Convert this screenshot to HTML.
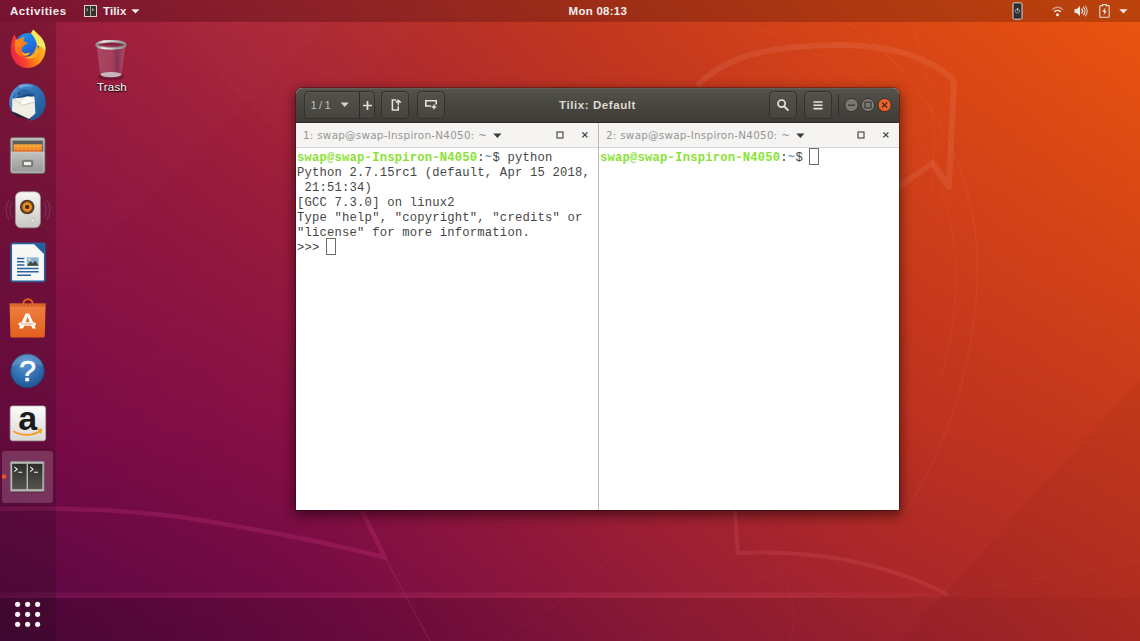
<!DOCTYPE html>
<html lang="en">
<head>
<meta charset="utf-8">
<title>Tilix: Default</title>
<style>
*{box-sizing:border-box;margin:0;padding:0}
html,body{width:1140px;height:641px;overflow:hidden;background:#7b1045}
body{position:relative;font-family:"Liberation Sans","DejaVu Sans",sans-serif;color:#fff}
#wall{position:absolute;left:0;top:0;width:1140px;height:641px}
#topbar{position:absolute;left:0;top:0;width:1140px;height:22px;background:rgba(0,0,0,.2)}
#topbar .t{position:absolute;top:1.400px;height:22px;line-height:21.500px;font-weight:bold;font-size:11.500px;color:#f2f0ee;white-space:nowrap}
#dock{position:absolute;left:0;top:22px;width:56px;height:619px;background:rgba(20,14,20,.2)}
#dockicons{position:absolute;left:0;top:0;display:block}
#hl{position:absolute;left:2px;top:429px;width:51px;height:52px;border-radius:3px;background:rgba(255,255,255,.17)}
.ico{position:absolute;left:0;width:54px;height:54px}
.ico svg{position:absolute;left:0;top:0}
#trash{position:absolute;left:80.500px;top:36px;width:60px;height:62px}
#trash .lbl{position:absolute;left:1.500px;top:43px;width:60px;height:16px;line-height:16px;text-align:center;font-size:11.500px;letter-spacing:.16px;color:#fff;text-shadow:0 1px 1px rgba(0,0,0,.95),0 0 2px rgba(0,0,0,.7)}
#win{position:absolute;left:296px;top:88px;width:603px;height:422px;border-radius:6px 6px 0 0;box-shadow:0 4px 12px 2px rgba(0,0,0,.48),0 0 0 1px rgba(40,15,15,.35);background:#fff}
#hdr{position:absolute;left:0;top:0;width:603px;height:35px;border-radius:6px 6px 0 0;background:linear-gradient(#54534c,#47463f 50%,#3d3c37);border-bottom:1px solid #2b2a27;box-shadow:inset 0 1px 0 rgba(255,255,255,.08)}
.hb{position:absolute;top:3px;height:28px;border:1px solid #33322d;border-radius:4px;background:linear-gradient(#52514a,#46453f);box-shadow:inset 0 1px 0 rgba(255,255,255,.05)}
.hi{position:absolute;display:block;overflow:visible}
.htx{position:absolute;top:3px;height:28px;line-height:28px;font-size:11.300px;word-spacing:-.900px;color:#c2beb5;white-space:nowrap}
#title{position:absolute;left:0;top:0;width:603px;height:34px;line-height:34px;text-align:center;font-weight:bold;font-size:11.500px;letter-spacing:.57px;color:#dfdbd2}
.tabrow{position:absolute;top:35px;height:25px;background:#f5f4f3;border-bottom:1px solid #d9d7d4}
.tabrow .n{position:absolute;left:7px;top:0;height:24px;line-height:25px;font-family:"DejaVu Sans","Liberation Sans",sans-serif;font-size:10.400px;letter-spacing:.26px;color:#969693;white-space:nowrap}
.vdiv{position:absolute;left:302px;top:35px;width:1px;height:387px;background:#bdbcb9}
.term{position:absolute;top:60px;height:362px;background:#fff;font-family:"Liberation Mono","DejaVu Sans Mono",monospace;font-size:12.2px;letter-spacing:.2px;line-height:15px;color:#464646;white-space:pre;padding:2.700px 0 0 1px}
.term .g{color:#8ae234;font-weight:bold}
.term .b{color:#729fcf;font-weight:bold}
.cur{display:inline-block;width:10px;height:17.500px;border:1px solid #6c6c6c;vertical-align:top;margin:-3px 0 -2px -1px}
</style>
</head>
<body>
<svg id="wall" viewBox="0 0 1140 641">
<defs>
<linearGradient id="gt" x1="0" y1="0" x2="1" y2="0">
<stop offset="0" stop-color="#98193f"/>
<stop offset=".25" stop-color="#ae2934"/>
<stop offset=".5" stop-color="#c3381e"/>
<stop offset=".75" stop-color="#da4716"/>
<stop offset="1" stop-color="#ec550f"/>
</linearGradient>
<linearGradient id="gmid" x1="0" y1="0" x2="1" y2="0">
<stop offset="0" stop-color="#760a48"/>
<stop offset=".25" stop-color="#860f45"/>
<stop offset=".5" stop-color="#a01f36"/>
<stop offset=".78" stop-color="#bb3021"/>
<stop offset="1" stop-color="#c5391c"/>
</linearGradient>
<linearGradient id="gb" x1="0" y1="0" x2="1" y2="0">
<stop offset="0" stop-color="#530741"/>
<stop offset=".3" stop-color="#720a45"/>
<stop offset=".6" stop-color="#931b38"/>
<stop offset="1" stop-color="#b32c24"/>
</linearGradient>
<linearGradient id="gm1" gradientUnits="userSpaceOnUse" x1="0" y1="0" x2="0" y2="641">
<stop offset="0" stop-color="#fff" stop-opacity="0"/>
<stop offset=".68" stop-color="#fff" stop-opacity="1"/>
<stop offset="1" stop-color="#fff" stop-opacity="1"/>
</linearGradient>
<linearGradient id="gm2" gradientUnits="userSpaceOnUse" x1="0" y1="0" x2="0" y2="641">
<stop offset="0" stop-color="#fff" stop-opacity="0"/>
<stop offset=".68" stop-color="#fff" stop-opacity="0"/>
<stop offset="1" stop-color="#fff" stop-opacity="1"/>
</linearGradient>
<mask id="mk1"><rect width="1140" height="641" fill="url(#gm1)"/></mask>
<mask id="mk2"><rect width="1140" height="641" fill="url(#gm2)"/></mask>
<linearGradient id="dk" x1="0" y1="0" x2="1" y2="0"><stop offset="0" stop-color="#1a0010" stop-opacity=".2"/><stop offset=".5" stop-color="#1a0010" stop-opacity=".1"/><stop offset="1" stop-color="#1a0010" stop-opacity=".04"/></linearGradient>
<linearGradient id="band" x1="0" y1="0" x2="1" y2="0">
<stop offset="0" stop-color="#ff4f9a" stop-opacity=".1"/>
<stop offset=".8" stop-color="#ff6a7a" stop-opacity=".15"/>
<stop offset="1" stop-color="#ff6a7a" stop-opacity=".05"/>
</linearGradient>
</defs>
<rect width="1140" height="641" fill="url(#gt)"/>
<rect width="1140" height="641" fill="url(#gmid)" mask="url(#mk1)"/>
<rect width="1140" height="641" fill="url(#gb)" mask="url(#mk2)"/>
<!-- facets -->
<path d="M56 290L330 22H56z" fill="#fff" opacity=".012"/>
<path d="M160 22L420 22L296 150z" fill="#fff" opacity=".012"/>
<path d="M0 598H1140V641H0z" fill="url(#dk)"/>
<path d="M900 641L1140 380V641z" fill="#000" opacity=".03"/>
<!-- beaver line art -->
<g fill="none" stroke="#ffd0c0" stroke-linecap="round" stroke-linejoin="round">
<path d="M699 84C715 68 738 57 759 53C790 45 850 42 886 49C915 54 940 66 954 81L949 187L933 163L898 187" stroke-width="6" opacity=".1"/>
<path d="M845 22C905 60 960 130 975 230C985 320 960 430 900 520" stroke-width="1" opacity=".08"/>
<path d="M740 22C800 40 880 80 925 150C960 215 965 300 940 380" stroke-width="1" opacity=".06"/>
<path d="M910 22C930 70 940 130 930 200" stroke-width="1" opacity=".05"/>
</g>
<g fill="none" stroke="#ff70a0" stroke-linecap="round" stroke-linejoin="round">
<path d="M0 509C60 507 140 510 200 520C260 530 330 543 385 557.500L363 513" stroke-width="4.500" opacity=".16" stroke="#ff50a0"/>
<path d="M385 557.500L430 641" stroke-width="1.200" opacity=".14"/>
<path d="M735 512L738 553C780 551 830 554 880 568C905 575 930 585 946 594" stroke-width="4" opacity=".13" stroke="#ff8a8a"/>
<path d="M500 641C560 600 600 580 640 520" stroke-width="1" opacity=".07"/>
<path d="M640 641C700 600 820 560 870 510" stroke-width="1" opacity=".06"/>
<path d="M760 530C790 580 800 610 790 641" stroke-width="1" opacity=".06"/>
<path d="M930 598L1140 560" stroke-width="1" opacity=".05" stroke="#ff9a80"/>
</g>
<path d="M0 592.500H900L950 594.500L900 598H0z" fill="url(#band)"/>
</svg>

<div id="trash">
<svg width="44" height="46" viewBox="0 0 44 46" style="position:absolute;left:8px;top:0;display:block">
<defs>
<linearGradient id="rim" x1="0" y1="0" x2="1" y2="0"><stop offset="0" stop-color="#8d8d8d"/><stop offset=".25" stop-color="#f1f1f1"/><stop offset=".6" stop-color="#bdbdbd"/><stop offset="1" stop-color="#8a8a8a"/></linearGradient>
<linearGradient id="tbody" x1="0" y1="0" x2="1" y2="0"><stop offset="0" stop-color="#c8b8c8" stop-opacity=".27"/><stop offset=".5" stop-color="#c8b8c8" stop-opacity=".22"/><stop offset=".7" stop-color="#6a4a70" stop-opacity=".4"/><stop offset="1" stop-color="#c8b8c8" stop-opacity=".27"/></linearGradient>
</defs>
<ellipse cx="22" cy="41" rx="13" ry="3.600" fill="#2a0a18" opacity=".35"/>
<path d="M7.600 9L11.200 38.500C14 42.500 30 42.500 32.800 38.500L36.400 9z" fill="url(#tbody)"/>
<ellipse cx="22" cy="38.600" rx="10.400" ry="2.700" fill="#d2ccd0" opacity=".85"/>
<ellipse cx="22" cy="8.800" rx="14.300" ry="3.500" fill="none" stroke="url(#rim)" stroke-width="2.700"/>
<ellipse cx="22" cy="9" rx="13.400" ry="2.900" fill="#6a2038" opacity=".35"/>
</svg>
<div class="lbl">Trash</div>
</div>

<div id="topbar">
<div class="t" style="left:10px;letter-spacing:.56px">Activities</div>
<svg class="hi" style="left:84px;top:5px" width="13" height="12" viewBox="0 0 13 12"><rect x=".5" y=".5" width="12" height="11" fill="#33322f" stroke="#d8d4cc" stroke-width="1"/><path d="M6.500 1v10" stroke="#bdb9b0" stroke-width=".8"/><path d="M2.500 3.500l1.500 1.200-1.500 1.200M8 3.500l1.500 1.200L8 5.900" fill="none" stroke="#e8e6e0" stroke-width=".8"/></svg>
<div class="t" style="left:103px;letter-spacing:.12px">Tilix</div>
<svg class="hi" style="left:131px;top:9px" width="9" height="5" viewBox="0 0 9 5"><path d="M.3.200h8.200L4.400 4.600z" fill="#eceae6"/></svg>
<div class="t" style="left:568.600px;letter-spacing:.25px">Mon 08:13</div>
<svg class="hi" style="left:1012px;top:2px" width="11" height="18" viewBox="0 0 11 18"><rect x="1" y=".8" width="9" height="16.400" rx="1.300" fill="#2f2e33" stroke="#d9d6d2" stroke-width="1"/><circle cx="5.500" cy="9" r="2.100" fill="none" stroke="#9d9aa0" stroke-width=".9"/><path d="M5.500 6v3" stroke="#c8c6cc" stroke-width=".9"/></svg>
<svg class="hi" style="left:1052px;top:6px" width="11" height="11" viewBox="0 0 11 11"><g fill="none" stroke="#eceae6" stroke-linecap="round"><path d="M.700 3.300a6.800 6.800 0 0 1 9.600 0" stroke-width="1.500" opacity=".5"/><path d="M2.700 5.600a4 4 0 0 1 5.600 0" stroke-width="1.400"/></g><circle cx="5.500" cy="8.800" r="1.500" fill="#eceae6"/></svg>
<svg class="hi" style="left:1073.500px;top:5px" width="14" height="12" viewBox="0 0 14 12"><path d="M.500 4h2.300L6 1v10L2.800 8H.500z" fill="#eceae6"/><g fill="none" stroke="#eceae6" stroke-linecap="round"><path d="M7.800 4a3 3 0 0 1 0 4" stroke-width="1.200"/><path d="M9.500 2.400a5.200 5.200 0 0 1 0 7.200" stroke-width="1.200"/><path d="M11.300 1a7.400 7.400 0 0 1 0 10" stroke-width="1.100" opacity=".8"/></g></svg>
<svg class="hi" style="left:1098.500px;top:4px" width="11" height="14" viewBox="0 0 11 14"><path d="M3.600 1.600V.600h3.800v1H9.500a.700.700 0 0 1 .7.700V12.600a.700.700 0 0 1-.7.700H1.500a.700.700 0 0 1-.7-.7V2.300a.700.700 0 0 1 .7-.7z" fill="none" stroke="#dedbd6" stroke-width="1.100"/><path d="M6.400 3.600L3.300 7.800h2L4.500 11.200 7.700 6.800h-2z" fill="#f2f0ec"/></svg>
<svg class="hi" style="left:1119px;top:9px" width="9" height="5" viewBox="0 0 9 5"><path d="M.3.200h8.200L4.400 4.600z" fill="#eceae6"/></svg>
</div>

<div id="dock">
<div id="hl"></div>
<svg id="dockicons" width="56" height="619" viewBox="0 22 56 619">
<defs>
<linearGradient id="ffb" x1="0" y1=".65" x2="1" y2=".3"><stop offset="0" stop-color="#ea1f44"/><stop offset=".32" stop-color="#f7452e"/><stop offset=".62" stop-color="#ff8c14"/><stop offset="1" stop-color="#ffc72c"/></linearGradient>
<linearGradient id="ffg" x1=".2" y1="0" x2=".7" y2="1"><stop offset="0" stop-color="#1593f5"/><stop offset=".6" stop-color="#1f6fe0"/><stop offset="1" stop-color="#2a4fb0"/></linearGradient>
<linearGradient id="ffh" x1="0" y1="0" x2=".6" y2="1"><stop offset="0" stop-color="#ff9a18"/><stop offset="1" stop-color="#ff5a22"/></linearGradient>
<linearGradient id="tbb" x1="0" y1="0" x2="1" y2="1"><stop offset="0" stop-color="#5a9ad8"/><stop offset=".45" stop-color="#2f73b4"/><stop offset="1" stop-color="#1c4f8c"/></linearGradient>
<linearGradient id="fcab" x1="0" y1="0" x2="0" y2="1"><stop offset="0" stop-color="#bdbdbb"/><stop offset="1" stop-color="#7f7f7d"/></linearGradient>
<linearGradient id="fdrw" x1="0" y1="0" x2="0" y2="1"><stop offset="0" stop-color="#c2c2c0"/><stop offset="1" stop-color="#989896"/></linearGradient>
<linearGradient id="ffold" x1="0" y1="0" x2="0" y2="1"><stop offset="0" stop-color="#ffb13a"/><stop offset="1" stop-color="#e8621c"/></linearGradient>
<linearGradient id="spk" x1="0" y1="0" x2="0" y2="1"><stop offset="0" stop-color="#f7f7f5"/><stop offset="1" stop-color="#c9c8c4"/></linearGradient>
<radialGradient id="cone" cx=".5" cy=".5" r=".5"><stop offset="0" stop-color="#3a2410"/><stop offset=".28" stop-color="#5a3210"/><stop offset=".34" stop-color="#f0a020"/><stop offset=".62" stop-color="#e07818"/><stop offset=".7" stop-color="#6a4a2a"/><stop offset="1" stop-color="#4a3a2a"/></radialGradient>
<linearGradient id="bag" x1="0" y1="0" x2="0" y2="1"><stop offset="0" stop-color="#f08040"/><stop offset="1" stop-color="#e2601c"/></linearGradient>
<radialGradient id="hlp" cx=".45" cy=".3" r=".75"><stop offset="0" stop-color="#5a96d2"/><stop offset=".6" stop-color="#2f6cae"/><stop offset="1" stop-color="#1d4f8a"/></radialGradient>
<linearGradient id="amz" x1="0" y1="0" x2="0" y2="1"><stop offset="0" stop-color="#fbfbfa"/><stop offset="1" stop-color="#d9d8d5"/></linearGradient>
<linearGradient id="tpane" x1="0" y1="0" x2="0" y2="1"><stop offset="0" stop-color="#2c2c2a"/><stop offset="1" stop-color="#55554f"/></linearGradient>
</defs>

<!-- Firefox -->
<g transform="translate(6,28)">
<path d="M4.6 19C5 14 6.8 9.8 8.4 6.2C9 9 10.4 10.6 12 11.6C15 8 18.5 6 22.5 5.6C23.5 5.5 24.6 5.6 25.6 5.8C25.4 4.2 26.2 2.8 27.6 1.8C30 5 34.4 7.4 37.2 12.4C39.6 16.6 40.2 21.6 38.8 26.4C36.6 34 29.8 40 21.6 40C12 40 4 32 4.6 19Z" fill="url(#ffb)"/>
<circle cx="21.400" cy="17" r="11.700" fill="url(#ffg)"/>
<path d="M25.2 5.6C25.2 4.2 26.2 2.8 27.6 1.8C30 5 34.4 7.4 37.2 12.4C39 15.6 39.8 19 39.4 22.6C37 19 34 17.6 31 17.4C30.6 13 28 8.6 25.2 5.6Z" fill="#f4ea62"/>
<path d="M30.6 17.2C33.6 20 33.4 25.4 30 28.4C27 31 22 31.2 18.6 29C23 29.6 28.6 27 30.6 17.2Z" fill="#ffb21e" opacity=".9"/>
<path d="M9.4 12.4C12.6 11.6 15.8 9.4 19 8.6C17.6 10.4 17.2 12 17.6 13.6C19.2 13.8 20.6 14.2 21.8 15.2C20.2 16.6 18.2 17 17 18.6C15.6 20.4 15 22 16 23.4C18.2 25.6 21.4 25.8 24.4 24.6C22.6 27.6 19 29.4 15.2 28.4C10 27 7.2 20 9.4 12.4Z" fill="url(#ffh)"/>
<path d="M15.4 24.2C18 26.4 21.6 26 24.4 24.6C23.4 26.4 21.4 27.6 19.2 27.6C17.4 27.4 15.8 26 15.4 24.2Z" fill="#ffc02a"/>
</g>

<!-- Thunderbird -->
<g transform="translate(6,81)">
<path d="M3.2 22C3 12 10 3 20.6 2.6C31 2.4 39.6 10 39.8 21C40 31 32.6 39.4 23.4 39.8C26 36 27 33 26.4 30L8 33C5 30 3.4 26 3.2 22Z" fill="url(#tbb)"/>
<path d="M7 17C10 10 20 8 27.500 12L30 18L28 15L7 18Z" fill="#173d6c" opacity=".8"/>
<path d="M5 31L10.6 35.6L24 38.4L26 33Z" fill="#162538" opacity=".85"/>
<path d="M6.4 17.6L28.4 15.6L29.4 32.6L23 38L6 30Z" fill="#f1eee4"/>
<path d="M14 22C15.4 17.6 19 15.4 22.6 15.6C26.2 15.8 28.6 18 28.6 20.6L16.6 24.4Z" fill="#fbfaf5" stroke="#cfccc0" stroke-width=".5"/>
<path d="M6.6 18L16.6 24.4L29 20.8" fill="none" stroke="#c9c6ba" stroke-width=".7"/>
<path d="M8.4 15.8C9 11.4 12.6 8.4 17 8.2C22.6 8 27.6 11 29.4 16C26.4 13 22 12.2 18.6 13.4C17 14 15.4 15.4 13.6 15.6C12 15.8 10 15 8.4 15.8Z" fill="#2a67a6"/>
<path d="M9.6 12.4C10.8 9 13.4 7 16.4 6.6C13.8 8.4 12.6 10.6 12.8 13.2C12.8 14.4 11.4 16 10.2 17L7.6 17.4C8.6 16 9.2 14.4 9.6 12.4Z" fill="#3c7cc0"/>
<circle cx="12.6" cy="12.6" r=".8" fill="#3a1d10"/>
<path d="M12 4.6C17 2.4 23 3 27.6 6C23 5 18 5.2 14 7.4Z" fill="#7fb2e4" opacity=".75"/>
</g>

<!-- Files -->
<g transform="translate(6,134)">
<rect x="4.300" y="3.500" width="34.700" height="36" rx="2.200" fill="url(#fcab)" stroke="#6a6a68" stroke-width=".8"/>
<rect x="6.600" y="6.600" width="30.200" height="11.600" fill="#5f5e59"/>
<rect x="7.600" y="10.300" width="28.200" height="7.600" fill="url(#ffold)"/>
<path d="M7.600 12.600h28.200M7.600 15h28.200" stroke="#ffd25a" stroke-width=".7" opacity=".7"/>
<path d="M10 10.300v7.600M14 10.300v7.600M18 10.300v7.600M22 10.300v7.600M26 10.300v7.600M30 10.300v7.600M34 10.300v7.600" stroke="#c0501a" stroke-width=".6" opacity=".45"/>
<path d="M5.400 18h32.500v18.600a1.600 1.600 0 0 1-1.600 1.600H7a1.600 1.600 0 0 1-1.600-1.600z" fill="url(#fdrw)" stroke="#d6d6d4" stroke-width=".7"/>
<rect x="16.300" y="26.400" width="10.400" height="6.200" rx="1" fill="#838381" stroke="#62625f" stroke-width=".6"/>
<rect x="18" y="27.900" width="7" height="3.200" rx=".5" fill="#f0efec"/>
</g>

<!-- Rhythmbox -->
<g transform="translate(6,188)">
<path d="M6.4 14.6a12 12 0 0 0 0 14.6M3 12.4a17 17 0 0 0 0 19M37.6 14.6a12 12 0 0 1 0 14.6M41 12.4a17 17 0 0 1 0 19" fill="none" stroke="#8a9fd0" stroke-width="1.200" opacity=".22"/>
<rect x="9.4" y="3.8" width="25" height="36" rx="5.5" fill="url(#spk)" stroke="#9a9994" stroke-width=".7"/>
<circle cx="21.200" cy="19" r="7.300" fill="url(#cone)"/>
<circle cx="26.600" cy="32.600" r="2.200" fill="#e6e5e2" stroke="#aaa9a5" stroke-width=".6"/>
</g>

<!-- LibreOffice Writer -->
<g transform="translate(6,241)">
<rect x="5.200" y="2.400" width="33.600" height="38" rx="1.600" fill="#f7f7f6" stroke="#28609e" stroke-width="1.700"/>
<path d="M27.400 2.400h10.600a.800.800 0 0 1 .8.800v10.600z" fill="#28609e"/>
<path d="M27.400 2.400l11.400 11.400" stroke="#6f9bd0" stroke-width=".7" opacity=".8"/>
<path d="M11 17.600h7.400M11 20.800h7.400M11 24h7.400M11 27.400h21.600M11 30.800h21.600M11 34.200h14" stroke="#2b63a0" stroke-width="1.500"/>
<rect x="20.800" y="16.400" width="11.800" height="8.400" fill="#8fb4d8"/>
<path d="M20.800 24.800l3.600-4.600 2.600 2.400 2.200-3.200 3.400 5.400z" fill="#3f4a3a"/>
<circle cx="23.600" cy="18.400" r="1" fill="#fff7c0"/>
</g>

<!-- Ubuntu Software -->
<g transform="translate(6,295)">
<path d="M17.400 9.800V8.800a4.600 4.600 0 0 1 9.200 0v1" fill="none" stroke="#e2601c" stroke-width="2"/>
<path d="M3.600 8.600h36l-.8 32.400a1.400 1.400 0 0 1-1.400 1.400H5.800a1.400 1.400 0 0 1-1.400-1.400z" fill="url(#bag)"/>
<path d="M3.600 8.600h36l-.1 3H3.700z" fill="#c9501a" opacity=".75"/>
<path d="M5 10h33" stroke="#f7a070" stroke-width=".8" stroke-dasharray="2 1.500" opacity=".7"/>
<path d="M13 33.600L19.600 18.400h3.600L29.800 33.600h-3.400l-1.300-3.200h-6.800l-1.300 3.200zM19.400 27.600h4.400L21.600 21.800z" fill="#fff" fill-rule="evenodd"/>
<rect x="12.400" y="27.400" width="17.600" height="3.200" rx="1.600" fill="#fff"/>
<rect x="15" y="28.500" width="12.500" height="1" fill="#e2601c" opacity=".6"/>
</g>

<!-- Help -->
<g transform="translate(6,349)">
<circle cx="21.500" cy="22" r="16.800" fill="url(#hlp)" stroke="#1b4272" stroke-width=".8"/>
<path d="M5.700 18a16 16 0 0 1 31.600 0a30 30 0 0 0-31.600 0z" fill="#fff" opacity=".13"/>
<text x="21.600" y="32.200" text-anchor="middle" font-family="Liberation Sans, DejaVu Sans, sans-serif" font-weight="normal" font-size="30" fill="#fff" stroke="#fff" stroke-width=".7">?</text>
</g>

<!-- Amazon -->
<g transform="translate(6,402)">
<rect x="4.200" y="4" width="35.400" height="34.800" rx="2.400" fill="url(#amz)" stroke="#b9b8b4" stroke-width=".7"/>
<text x="21.800" y="27.800" text-anchor="middle" font-family="Liberation Sans, DejaVu Sans, sans-serif" font-weight="bold" font-size="34" fill="#1b1b1b">a</text>
<path d="M7.800 29.600c8 4.600 19 4.400 26.400-.6" fill="none" stroke="#f79a1c" stroke-width="1.700" stroke-linecap="round"/>
<path d="M31.600 27.600l4-.4-1.200 3.800" fill="none" stroke="#f79a1c" stroke-width="1.400" stroke-linecap="round" stroke-linejoin="round"/>
</g>

<!-- Tilix -->
<circle cx="4" cy="476.500" r="2.300" fill="#e95420"/>
<g transform="translate(6,455)">
<rect x="4.400" y="6.400" width="33.600" height="30" rx="1" fill="#b9b9b6" stroke="#8a8a86" stroke-width=".7"/>
<rect x="6.200" y="8.800" width="14.400" height="25.400" fill="url(#tpane)"/>
<rect x="22" y="8.800" width="14.400" height="25.400" fill="url(#tpane)"/>
<path d="M8.400 11.800l2.800 2.400-2.800 2.400M12.400 17.200h3.800M24.200 11.800l2.800 2.400-2.800 2.400M28.200 17.200h3.800" fill="none" stroke="#f2f2f0" stroke-width="1.100"/>
<path d="M4.600 37.200h33.200" stroke="#3a2030" stroke-width="1" opacity=".5"/>
</g>

<!-- Show apps -->
<g fill="#f4f2f0">
<circle cx="17.600" cy="604.300" r="2.600"/><circle cx="27.600" cy="604.300" r="2.600"/><circle cx="37.600" cy="604.300" r="2.600"/>
<circle cx="17.600" cy="614.300" r="2.600"/><circle cx="27.600" cy="614.300" r="2.600"/><circle cx="37.600" cy="614.300" r="2.600"/>
<circle cx="17.600" cy="624.300" r="2.600"/><circle cx="27.600" cy="624.300" r="2.600"/><circle cx="37.600" cy="624.300" r="2.600"/>
</g>
</svg>
</div>

<div id="win">
<div id="hdr">
<div id="title">Tilix: Default</div>
<div class="hb" style="left:8px;width:71px"></div>
<div class="hb" style="left:62.5px;width:1px;border:0;border-radius:0;background:#2d2c29;box-shadow:none;top:4px;height:26px"></div>
<div class="htx" style="left:14.500px">1 / 1</div>
<svg class="hi" style="left:44px;top:14px" width="10" height="6" viewBox="0 0 10 6"><path d="M0.6 0.5h8.2l-4.1 4.6z" fill="#d6d2c8"/></svg>
<svg class="hi" style="left:66px;top:12px" width="11" height="11" viewBox="0 0 11 11"><path d="M5.5 1v9M1 5.5h9" stroke="#e4e0d6" stroke-width="1.7" fill="none"/></svg>
<div class="hb" style="left:85px;width:28px"></div>
<svg class="hi" style="left:93.700px;top:10px" width="14" height="14" viewBox="0 0 14 14"><path d="M6.2 2H2.4v10h5.8V8.2" stroke="#e4e0d6" stroke-width="1.6" fill="none"/><path d="M8.3 7.2V2.6M5.9 4.6L8.3 2.2l2.4 2.4" stroke="#e4e0d6" stroke-width="1.5" fill="none"/></svg>
<div class="hb" style="left:120.5px;width:28px"></div>
<svg class="hi" style="left:128px;top:11px" width="14" height="12" viewBox="0 0 14 12"><path d="M7.2 7H1.8V1.8h10.4v3.6" stroke="#e4e0d6" stroke-width="1.6" fill="none"/><path d="M10 5.6v4.6M7.7 7.9h4.6" stroke="#e4e0d6" stroke-width="1.5" fill="none"/></svg>
<div class="hb" style="left:473px;width:28px"></div>
<svg class="hi" style="left:480px;top:10px" width="14" height="14" viewBox="0 0 14 14"><circle cx="5.6" cy="5.6" r="3.6" stroke="#e9e5dc" stroke-width="1.7" fill="none"/><path d="M8.3 8.3l3.6 3.8" stroke="#e9e5dc" stroke-width="1.9" stroke-linecap="round"/></svg>
<div class="hb" style="left:508px;width:28px"></div>
<svg class="hi" style="left:516px;top:12px" width="12" height="11" viewBox="0 0 12 11"><path d="M1.5 2h9M1.5 5.3h9M1.5 8.6h9" stroke="#e9e5dc" stroke-width="1.6"/></svg>
<div style="position:absolute;left:542px;top:6px;width:1px;height:22px;background:#2f2e2a"></div>
<svg class="hi" style="left:547px;top:9px" width="52" height="16" viewBox="0 0 52 16">
<circle cx="8.5" cy="8" r="6.6" fill="#7b7972" stroke="#34332f" stroke-width="1"/><path d="M5 8.2h7" stroke="#42413c" stroke-width="1.5"/>
<circle cx="25" cy="8" r="6.6" fill="#7b7972" stroke="#34332f" stroke-width="1"/><rect x="22" y="5.2" width="6" height="5.6" fill="none" stroke="#42413c" stroke-width="1.4"/>
<circle cx="41.6" cy="8" r="6.6" fill="#e9632e" stroke="#4a2a1c" stroke-width="1"/><path d="M39 5.4l5.2 5.2M44.2 5.4L39 10.6" stroke="#5a2a16" stroke-width="1.4"/>
</svg>
</div>
<div class="tabrow" style="left:0;width:302px"><div class="n">1: swap@swap-Inspiron-N4050: ~</div>
<svg class="hi" style="left:197px;top:10px" width="9" height="6" viewBox="0 0 9 6"><path d="M0.3 0.5h8.2l-4.1 4.6z" fill="#3b3b39"/></svg>
<svg class="hi" style="left:260px;top:8px" width="8" height="8" viewBox="0 0 8 8"><rect x="1" y="1" width="6" height="6" fill="none" stroke="#3f3f3d" stroke-width="1.1"/></svg>
<svg class="hi" style="left:285px;top:8px" width="8" height="8" viewBox="0 0 8 8"><path d="M1.4 1.4l5 5M6.4 1.4l-5 5" stroke="#3f3f3d" stroke-width="1.3"/></svg>
</div>
<div class="vdiv"></div>
<div class="tabrow" style="left:303px;width:300px"><div class="n">2: swap@swap-Inspiron-N4050: ~</div>
<svg class="hi" style="left:197px;top:10px" width="9" height="6" viewBox="0 0 9 6"><path d="M0.3 0.5h8.2l-4.1 4.6z" fill="#3b3b39"/></svg>
<svg class="hi" style="left:258px;top:8px" width="8" height="8" viewBox="0 0 8 8"><rect x="1" y="1" width="6" height="6" fill="none" stroke="#3f3f3d" stroke-width="1.1"/></svg>
<svg class="hi" style="left:283px;top:8px" width="8" height="8" viewBox="0 0 8 8"><path d="M1.4 1.4l5 5M6.4 1.4l-5 5" stroke="#3f3f3d" stroke-width="1.3"/></svg>
</div>
<div class="term" style="left:0;width:302px"><span class="g">swap@swap-Inspiron-N4050</span>:<span class="b">~</span>$ python
Python 2.7.15rc1 (default, Apr 15 2018,
 21:51:34)
[GCC 7.3.0] on linux2
Type "help", "copyright", "credits" or
"license" for more information.
&gt;&gt;&gt; <span class="cur"></span></div>
<div class="term" style="left:303px;width:300px"><span class="g">swap@swap-Inspiron-N4050</span>:<span class="b">~</span>$ <span class="cur"></span></div>
</div>
</body>
</html>
